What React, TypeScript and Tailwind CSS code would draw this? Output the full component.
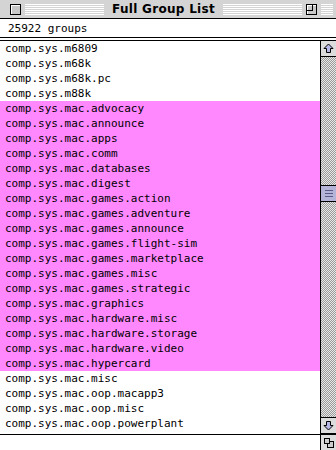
import React from "react";

const groups = [
  "comp.sys.m6809",
  "comp.sys.m68k",
  "comp.sys.m68k.pc",
  "comp.sys.m88k",
  "comp.sys.mac.advocacy",
  "comp.sys.mac.announce",
  "comp.sys.mac.apps",
  "comp.sys.mac.comm",
  "comp.sys.mac.databases",
  "comp.sys.mac.digest",
  "comp.sys.mac.games.action",
  "comp.sys.mac.games.adventure",
  "comp.sys.mac.games.announce",
  "comp.sys.mac.games.flight-sim",
  "comp.sys.mac.games.marketplace",
  "comp.sys.mac.games.misc",
  "comp.sys.mac.games.strategic",
  "comp.sys.mac.graphics",
  "comp.sys.mac.hardware.misc",
  "comp.sys.mac.hardware.storage",
  "comp.sys.mac.hardware.video",
  "comp.sys.mac.hypercard",
  "comp.sys.mac.misc",
  "comp.sys.mac.oop.macapp3",
  "comp.sys.mac.oop.misc",
  "comp.sys.mac.oop.powerplant",
];

// rows 4..21 are selected
const isSelected = (i: number) => i >= 4 && i <= 21;

const Stripes = () => (
  <div className="flex-1 h-[11px] flex flex-col justify-between">
    {[0, 1, 2, 3, 4, 5].map((k) => (
      <div key={k} className="h-px bg-[#8a8a8a] border-b border-white" />
    ))}
  </div>
);

const ArrowBox = ({ down }: { down?: boolean }) => (
  <div className="h-[16px] w-full bg-[#dcdcdc] border-b border-black flex items-center justify-center">
    <svg width="11" height="11" viewBox="0 0 11 11" className={down ? "rotate-180" : ""}>
      <path d="M5.5 1 L10 5.5 L7.5 5.5 L7.5 9.5 L3.5 9.5 L3.5 5.5 L1 5.5 Z" fill="#b8b8e8" stroke="#000" strokeWidth="1" />
    </svg>
  </div>
);

export default function App() {
  return (
    <div className="w-[336px] h-[450px] bg-white flex flex-col overflow-hidden font-['DejaVu_Sans_Mono',monospace] text-[11px] text-black">
      {/* Title bar */}
      <div className="h-[19px] bg-[#d4d4d4] border-b border-black flex items-center px-[3px] gap-[4px]">
        <div className="w-[3px]" />
        <div className="w-[11px] h-[11px] border border-black bg-[#c8c8c8] shadow-[inset_1px_1px_0_#fff]" />
        <Stripes />
        <span className="px-[4px] font-['DejaVu_Sans',sans-serif] font-bold text-[12px] leading-none tracking-[0.3px]">
          Full Group List
        </span>
        <Stripes />
        <div className="w-[11px] h-[11px] border border-black bg-[#c8c8c8] shadow-[inset_1px_1px_0_#fff] relative">
          <div className="absolute left-0 top-0 w-[6px] h-[6px] border-r border-b border-black" />
        </div>
        <div className="w-[12px] h-[11px] flex flex-col justify-between">
          {[0, 1, 2, 3, 4, 5].map((k) => (
            <div key={k} className="h-px bg-[#8a8a8a] border-b border-white" />
          ))}
        </div>
      </div>

      {/* Header */}
      <div className="h-[18px] flex items-center pl-[8px] leading-none">25922 groups</div>
      <div className="h-[4px] border-t border-b border-black" />

      {/* List + scrollbar */}
      <div className="flex h-[393px]">
        <div className="flex-1 flex flex-col">
          {groups.map((g, i) => (
            <div
              key={g}
              className={`h-[15px] leading-[15px] pl-[5px] whitespace-nowrap overflow-hidden ${
                isSelected(i) ? "bg-[#ff88ff]" : "bg-white"
              }`}
            >
              {g}
            </div>
          ))}
        </div>
        <div className="w-[16px] border-l border-black flex flex-col">
          <ArrowBox />
          <div className="flex-1 bg-[repeating-conic-gradient(#9a9a9a_0_25%,#e8e8e8_0_50%)] bg-[length:2px_2px] flex flex-col">
            <div className="h-[128px]" />
            <div className="h-[17px] border-t border-b border-black bg-[#b4b4d8] flex flex-col items-center justify-center gap-[2px]">
              {[0, 1, 2].map((k) => (
                <div key={k} className="w-[8px] h-px bg-[#5a5a8a]" />
              ))}
            </div>
          </div>
          <div className="border-t border-black">
            <ArrowBox down />
          </div>
        </div>
      </div>

      {/* Bottom bar */}
      <div className="h-[16px] border-t border-black flex justify-end">
        <div className="w-[16px] border-l border-black bg-[#dcdcdc] flex items-center justify-center">
          <div className="relative w-[10px] h-[10px]">
            <div className="absolute right-0 bottom-0 w-[7px] h-[7px] border border-black bg-[#ccc]" />
            <div className="absolute left-0 top-0 w-[6px] h-[6px] border border-black bg-[#ccc]" />
          </div>
        </div>
      </div>
    </div>
  );
}
